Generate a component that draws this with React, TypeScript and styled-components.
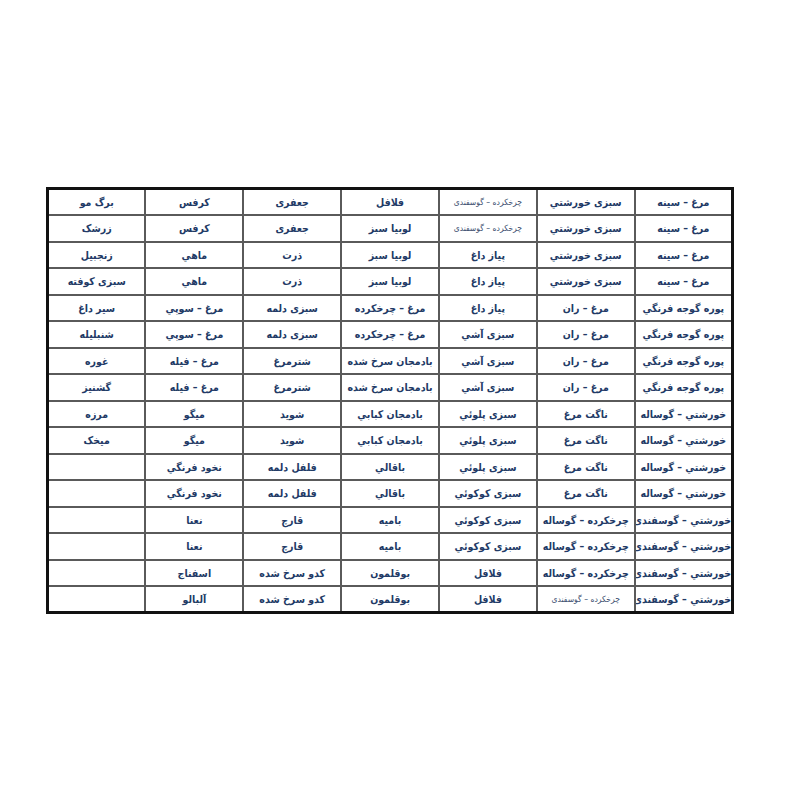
import React from 'react';
import styled, { createGlobalStyle } from 'styled-components';

const GlobalStyle = createGlobalStyle`
  html, body {
    margin: 0;
    padding: 0;
    background: #ffffff;
  }
  body {
    font-family: "DejaVu Sans Condensed", "DejaVu Sans", sans-serif;
  }
`;

const Page = styled.div`
  width: 800px;
  height: 800px;
  padding: 187px 0 0 46px;
  box-sizing: border-box;
`;

const Table = styled.table`
  direction: rtl;
  width: 688px;
  height: 424px;
  table-layout: fixed;
  border-collapse: collapse;
  border: 3px solid #111;
`;

const Row = styled.tr`
  height: 26.5px;
`;

const Cell = styled.td<{ $small?: boolean }>`
  border: 2px solid #5a5a5a;
  padding: 0;
  text-align: center;
  vertical-align: middle;
  white-space: nowrap;
  overflow: hidden;
  font-family: "DejaVu Sans Condensed", "DejaVu Sans", sans-serif;
  font-stretch: condensed;
  color: ${(p) => (p.$small ? '#3d4f70' : '#223a66')};
  font-size: ${(p) => (p.$small ? '8.5px' : '10.5px')};
  font-weight: ${(p) => (p.$small ? 400 : 700)};
`;

const SMALL = '*';

// columns listed right to left, as read; a leading * marks the small plain text
const rows: string[][] = [
  ['مرغ – سینه', 'سبزی خورشتي', '*چرخکرده – گوسفندی', 'فلافل', 'جعفری', 'کرفس', 'برگ مو'],
  ['مرغ – سینه', 'سبزی خورشتي', '*چرخکرده – گوسفندی', 'لوبیا سبز', 'جعفری', 'کرفس', 'زرشک'],
  ['مرغ – سینه', 'سبزی خورشتي', 'پیاز داغ', 'لوبیا سبز', 'ذرت', 'ماهي', 'زنجبیل'],
  ['مرغ – سینه', 'سبزی خورشتي', 'پیاز داغ', 'لوبیا سبز', 'ذرت', 'ماهي', 'سبزی کوفته'],
  ['پوره گوجه فرنگي', 'مرغ – ران', 'پیاز داغ', 'مرغ – چرخکرده', 'سبزی دلمه', 'مرغ – سوپي', 'سیر داغ'],
  ['پوره گوجه فرنگي', 'مرغ – ران', 'سبزی آشي', 'مرغ – چرخکرده', 'سبزی دلمه', 'مرغ – سوپي', 'شنبلیله'],
  ['پوره گوجه فرنگي', 'مرغ – ران', 'سبزی آشي', 'بادمجان سرخ شده', 'شترمرغ', 'مرغ – فیله', 'غوره'],
  ['پوره گوجه فرنگي', 'مرغ – ران', 'سبزی آشي', 'بادمجان سرخ شده', 'شترمرغ', 'مرغ – فیله', 'گشنیز'],
  ['خورشتي – گوساله', 'ناگت مرغ', 'سبزی پلوئي', 'بادمجان کبابي', 'شوید', 'میگو', 'مرزه'],
  ['خورشتي – گوساله', 'ناگت مرغ', 'سبزی پلوئي', 'بادمجان کبابي', 'شوید', 'میگو', 'میخک'],
  ['خورشتي – گوساله', 'ناگت مرغ', 'سبزی پلوئي', 'باقالي', 'فلفل دلمه', 'نخود فرنگي', ''],
  ['خورشتي – گوساله', 'ناگت مرغ', 'سبزی کوکوئي', 'باقالي', 'فلفل دلمه', 'نخود فرنگي', ''],
  ['خورشتي – گوسفندی', 'چرخکرده – گوساله', 'سبزی کوکوئي', 'بامیه', 'قارچ', 'نعنا', ''],
  ['خورشتي – گوسفندی', 'چرخکرده – گوساله', 'سبزی کوکوئي', 'بامیه', 'قارچ', 'نعنا', ''],
  ['خورشتي – گوسفندی', 'چرخکرده – گوساله', 'فلافل', 'بوقلمون', 'کدو سرخ شده', 'اسفناج', ''],
  ['خورشتي – گوسفندی', '*چرخکرده – گوسفندی', 'فلافل', 'بوقلمون', 'کدو سرخ شده', 'آلبالو', ''],
];

export default function App() {
  return (
    <>
      <GlobalStyle />
      <Page>
        <Table>
          <tbody>
            {rows.map((row, i) => (
              <Row key={i}>
                {row.map((text, j) => {
                  const small = text.startsWith(SMALL);
                  return (
                    <Cell key={j} $small={small}>
                      {small ? text.slice(1) : text}
                    </Cell>
                  );
                })}
              </Row>
            ))}
          </tbody>
        </Table>
      </Page>
    </>
  );
}
